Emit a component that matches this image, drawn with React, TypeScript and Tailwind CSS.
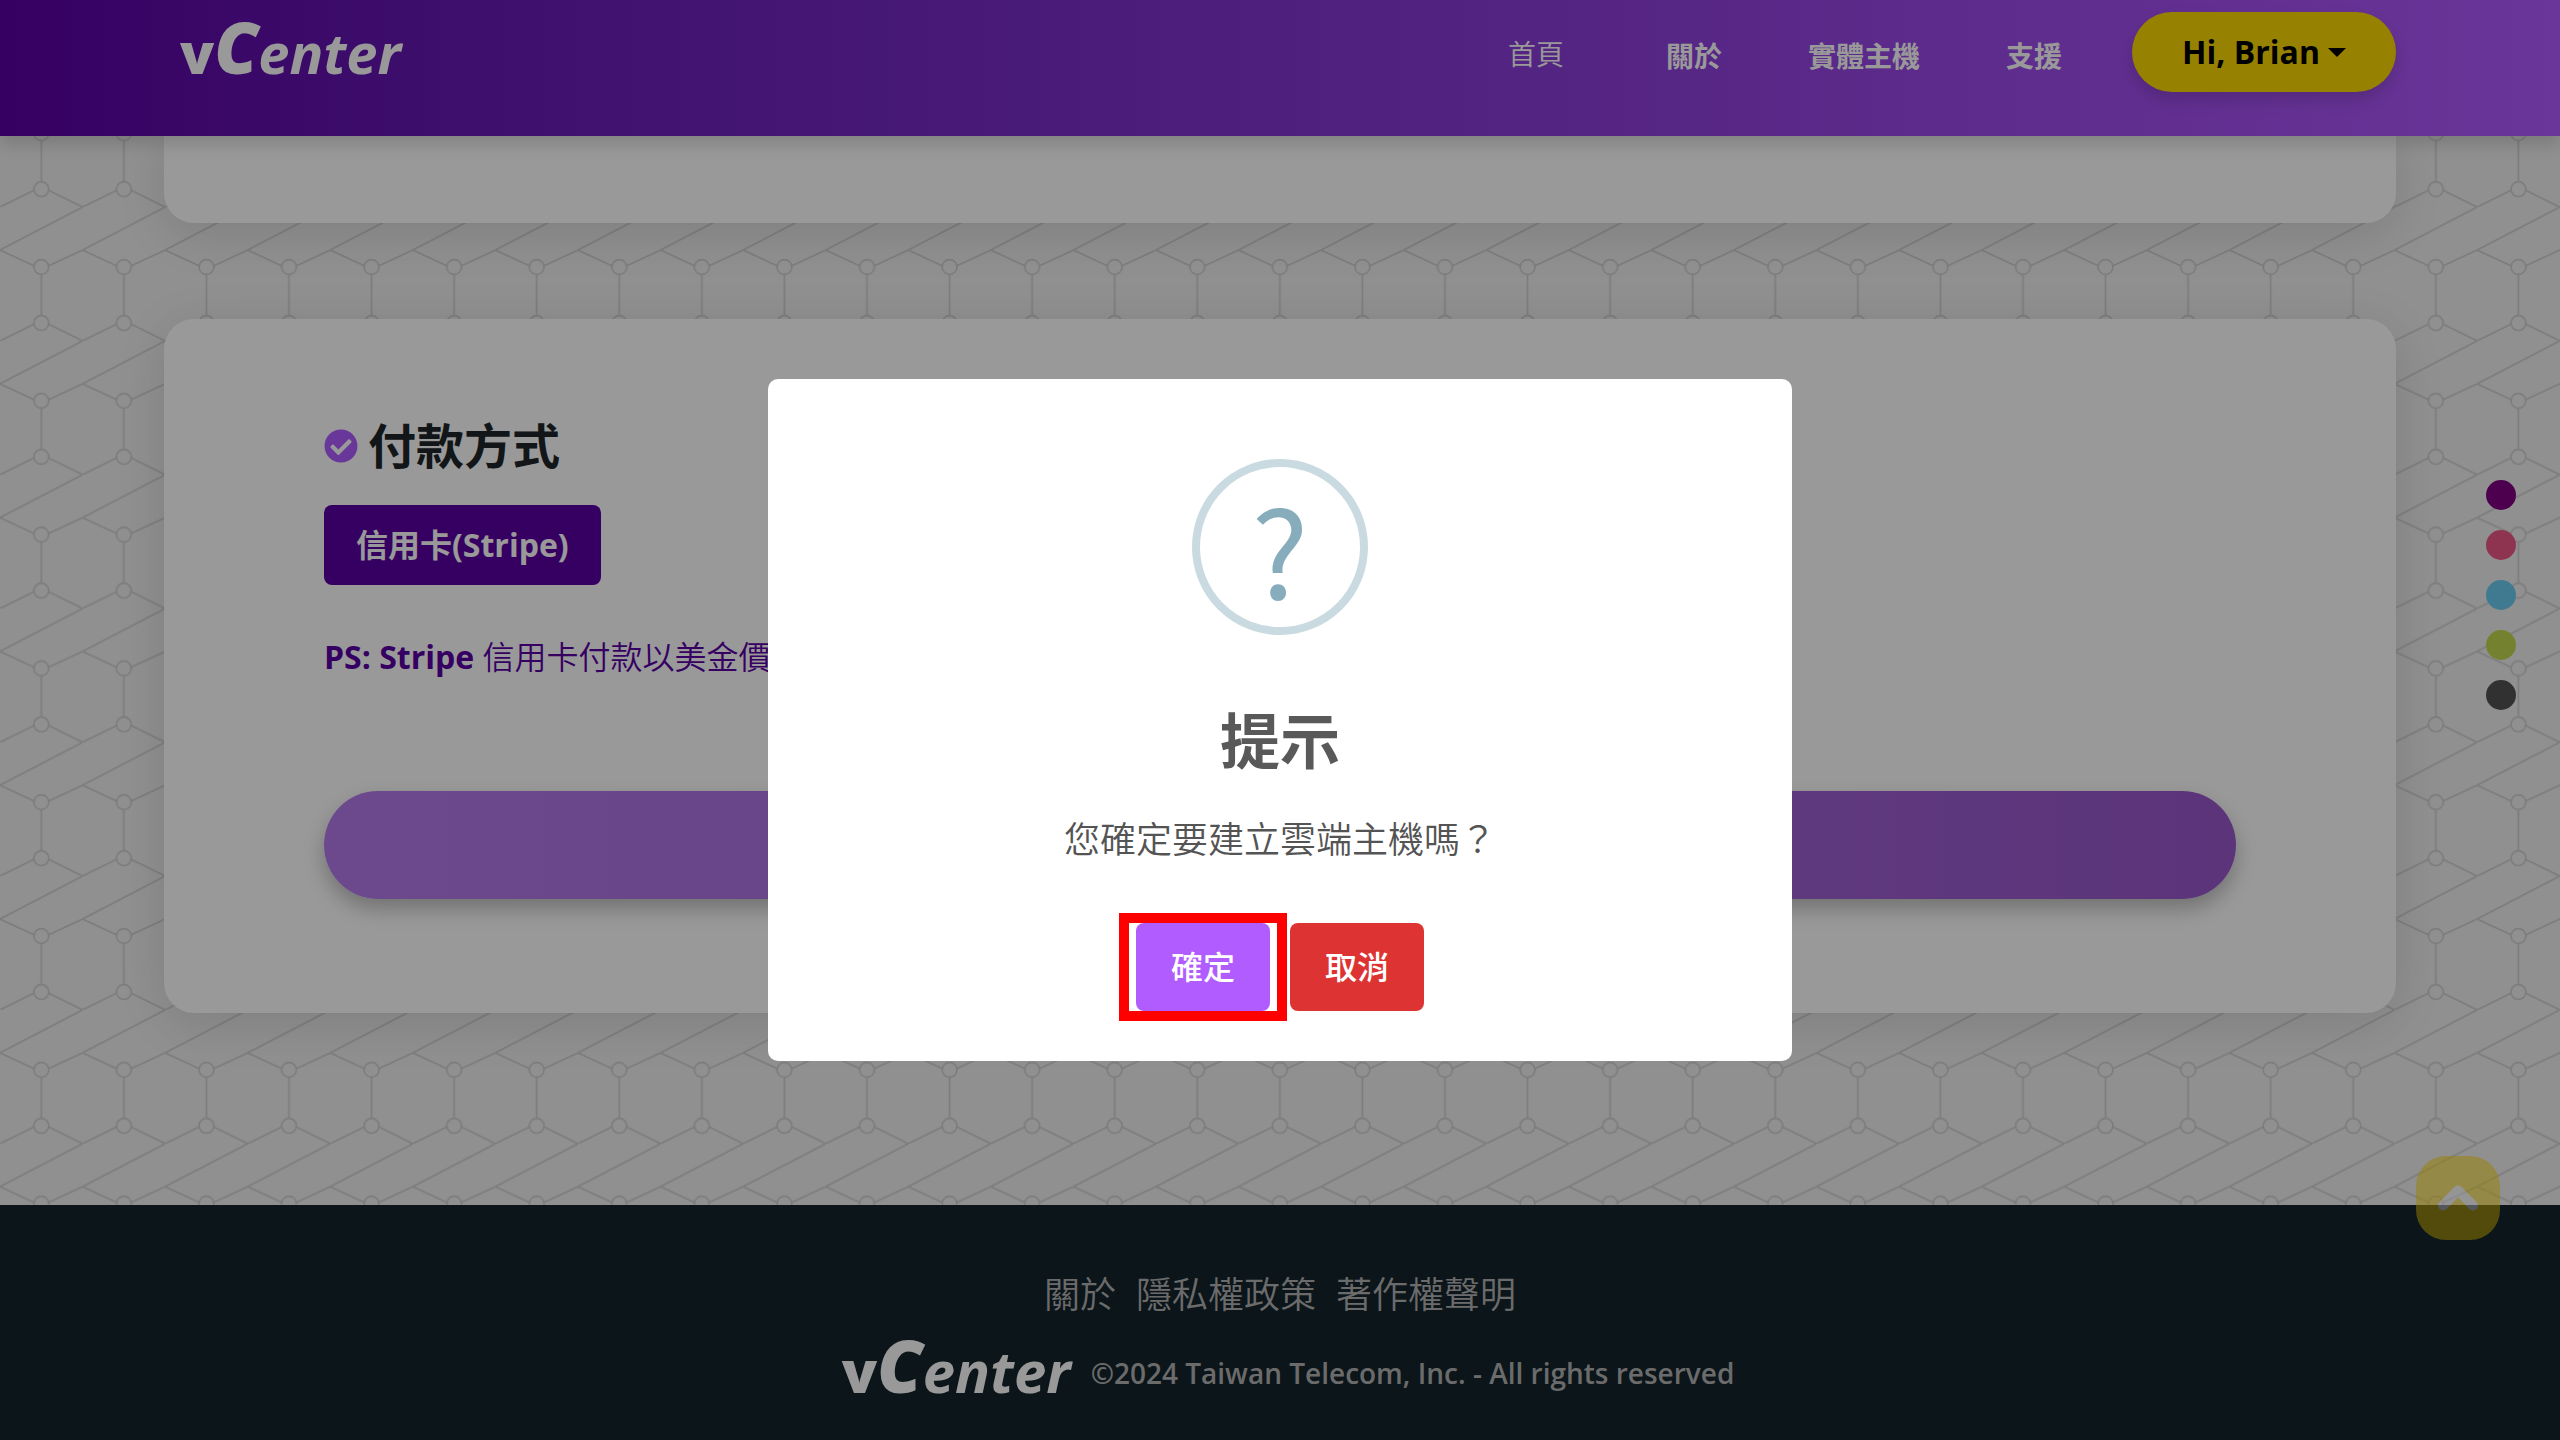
import { useState } from 'react';
import { ChevronUp } from 'lucide-react';
import { FaCheckCircle } from 'react-icons/fa';

const NAV_LINKS = [
  { label: '關於', href: '#about' },
  { label: '實體主機', href: '#hosts' },
  { label: '支援', href: '#support' },
];

const FOOTER_LINKS = [
  { label: '關於', href: '#about' },
  { label: '隱私權政策', href: '#privacy' },
  { label: '著作權聲明', href: '#copyright' },
];

const THEMES = [
  { name: 'purple', className: 'bg-[#800080]' },
  { name: 'pink', className: 'bg-[#ef5786]' },
  { name: 'blue', className: 'bg-[#6acbf0]' },
  { name: 'green', className: 'bg-[#c2d94f]' },
  { name: 'dark', className: 'bg-[#525252]' },
];

export default function App() {
  const [open, setOpen] = useState(true);

  return (
    <div className="relative flex min-h-screen flex-col bg-[#f0f0f0] font-['Open_Sans','Noto_Sans_CJK_TC',sans-serif] text-[#212529]">
      <HexBackground />
      <Header />

      <main className="relative flex flex-1 flex-col gap-24 px-[164px] pb-48">
        <section className="h-[87px] rounded-b-[30px] bg-white shadow-[0_10px_50px_rgba(0,0,0,0.12)]" />
        <PaymentCard onCreate={() => setOpen(true)} />
      </main>

      <Footer />
      <ThemeDots />

      <a
        href="#top"
        aria-label="回到頂端"
        className="fixed right-[60px] bottom-[200px] flex size-[84px] items-center justify-center rounded-[30px] bg-[#ffd900] text-white opacity-50"
      >
        <ChevronUp className="size-[60px]" strokeWidth={4} />
      </a>

      {open && <ConfirmDialog onClose={() => setOpen(false)} />}
    </div>
  );
}

// Repeating hexagon line art behind the whole page
function HexBackground() {
  return (
    <svg className="absolute inset-0 h-full w-full" aria-hidden="true">
      <defs>
        <pattern id="hex" width="82.57" height="133.8" patternUnits="userSpaceOnUse" patternTransform="translate(0 -60.5)">
          <g fill="none" stroke="#d0d0d0" strokeWidth="1.7">
            <path d="M82.57 0 L0 43 L34.4 58.9 M82.57 43 L48.2 58.9" />
            <path d="M41.3 67.3 V108.5" />
            <path d="M0 133.8 L34.4 116.9 M48.2 116.9 L82.57 133.8" />
            <circle cx="41.3" cy="59.9" r="7.4" />
            <circle cx="41.3" cy="115.9" r="7.4" />
          </g>
        </pattern>
      </defs>
      <rect width="100%" height="100%" fill="url(#hex)" />
    </svg>
  );
}

function Logo({ className }: { className: string }) {
  return (
    <span className={`block leading-[80px] font-extrabold whitespace-nowrap text-white ${className}`}>
      v<span className="text-[1.25em] italic">C</span>
      <span className="font-bold italic">enter</span>
    </span>
  );
}

function Header() {
  return (
    <header className="relative z-10 flex h-[136px] items-start justify-between bg-linear-to-r from-[#5a00a5] to-[#b05aff] pr-[164px] pl-[180px] shadow-[0_8px_16px_rgba(0,0,0,0.15)]">
      <a href="#home" className="pt-[7px]">
        <Logo className="text-[56px]" />
      </a>
      <nav className="flex pt-3 text-[28px] text-white">
        <a href="#home" className="mt-5 mr-[102px] leading-[44px] font-[350]">
          首頁
        </a>
        <div className="mt-[22px] mr-[70px] flex gap-[86px] leading-[44px] font-bold">
          {NAV_LINKS.map((link) => (
            <a key={link.label} href={link.href}>
              {link.label}
            </a>
          ))}
        </div>
        <button
          type="button"
          className="flex h-20 w-[264px] items-center justify-center gap-2 rounded-full bg-[#fad900] text-[32px] font-bold text-black shadow-[0_8px_16px_rgba(0,0,0,0.15)]"
        >
          Hi, Brian
          <span className="border-x-[9px] border-t-[9px] border-x-transparent border-t-black" />
        </button>
      </nav>
    </header>
  );
}

function PaymentCard({ onCreate }: { onCreate: () => void }) {
  return (
    <section className="rounded-[30px] bg-white px-40 pt-[98px] pb-[114px] shadow-[0_10px_50px_rgba(0,0,0,0.12)]">
      <h2 className="flex items-center gap-[10px] text-[48px] leading-[58px] font-bold">
        <FaCheckCircle className="size-[34px] text-[#b05aff]" />
        付款方式
      </h2>
      <button
        type="button"
        className="mt-[30px] h-20 rounded-lg bg-[#5a00a5] px-8 text-[32px] font-bold text-white"
      >
        信用卡(Stripe)
      </button>
      <p className="mt-12 text-[32px] leading-[48px] font-[350] text-[#5a00a5]">
        <span className="font-bold">PS: Stripe</span> 信用卡付款以美金價格計算
      </p>
      <button
        type="button"
        aria-label="建立雲端主機"
        onClick={onCreate}
        className="mt-[110px] block h-[108px] w-full rounded-full bg-linear-to-r from-[#b57beb] to-[#9857cc] shadow-[0_10px_20px_rgba(0,0,0,0.25)]"
      />
    </section>
  );
}

function Footer() {
  return (
    <footer className="relative flex h-[235px] flex-col items-center bg-[#14232b] pt-[63px] text-[#b3b3b3]">
      <nav className="flex gap-5 text-[36px] leading-[54px] font-[350]">
        {FOOTER_LINKS.map((link) => (
          <a key={link.label} href={link.href}>
            {link.label}
          </a>
        ))}
      </nav>
      <div className="flex items-start gap-5 pt-[3px] pl-4">
        <Logo className="text-[58px]" />
        <p className="pt-7 text-[28px] leading-[40px] font-semibold">©2024 Taiwan Telecom, Inc. - All rights reserved</p>
      </div>
    </footer>
  );
}

function ThemeDots() {
  return (
    <div className="fixed top-[480px] right-11 flex flex-col gap-5">
      {THEMES.map((theme) => (
        <button
          key={theme.name}
          type="button"
          aria-label={theme.name}
          className={`size-[30px] rounded-full ${theme.className}`}
        />
      ))}
    </div>
  );
}

function ConfirmDialog({ onClose }: { onClose: () => void }) {
  return (
    <div className="fixed inset-0 z-20 flex items-center justify-center bg-black/40">
      <div
        role="dialog"
        aria-modal="true"
        aria-labelledby="dialog-title"
        className="flex w-2/5 flex-col items-center rounded-[10px] bg-white pt-20 pb-[50px] text-[#545454]"
      >
        <div className="flex size-44 items-center justify-center rounded-full border-8 border-[#c9dae1] font-['Noto_Sans_CJK_TC',sans-serif] text-[120px] leading-none text-[#87adbd]">
          ?
        </div>
        <h2 id="dialog-title" className="mt-[70px] text-[60px] leading-[72px] font-bold text-[#595959]">
          提示
        </h2>
        <p className="mt-9 text-[36px] leading-[54px] font-[350]">您確定要建立雲端主機嗎？</p>
        <div className="mt-14 flex gap-5 text-[32px] font-medium text-white">
          <div className="relative">
            <button type="button" onClick={onClose} className="h-[88px] w-[134px] rounded-lg bg-[#b05cff]">
              確定
            </button>
            {/* callout frame around the confirm button */}
            <span className="pointer-events-none absolute -inset-x-[17px] -inset-y-[10px] border-[10px] border-[#ff0000]" />
          </div>
          <button type="button" onClick={onClose} className="h-[88px] w-[134px] rounded-lg bg-[#dd3333]">
            取消
          </button>
        </div>
      </div>
    </div>
  );
}
